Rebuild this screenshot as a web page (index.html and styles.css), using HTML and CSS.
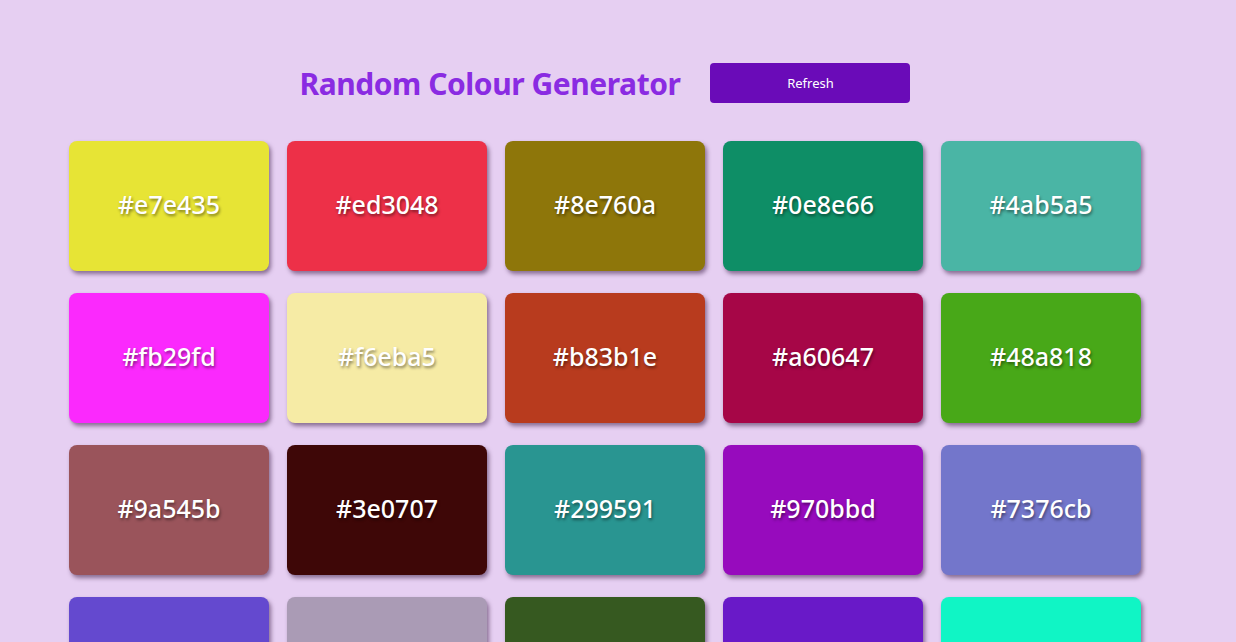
FILE: index.html
```html
<!DOCTYPE html>
<html>
<head>
<meta charset="utf-8">
<title>Random Colour Generator</title>
<link rel="stylesheet" href="styles.css">
</head>
<body>
<div class="page">
  <header class="header">
    <h1 class="title">Random Colour Generator</h1>
    <button class="refresh">Refresh</button>
  </header>
  <main class="grid">
    <div class="card" style="background:#e7e435">#e7e435</div>
    <div class="card" style="background:#ed3048">#ed3048</div>
    <div class="card" style="background:#8e760a">#8e760a</div>
    <div class="card" style="background:#0e8e66">#0e8e66</div>
    <div class="card" style="background:#4ab5a5">#4ab5a5</div>
    <div class="card" style="background:#fb29fd">#fb29fd</div>
    <div class="card" style="background:#f6eba5">#f6eba5</div>
    <div class="card" style="background:#b83b1e">#b83b1e</div>
    <div class="card" style="background:#a60647">#a60647</div>
    <div class="card" style="background:#48a818">#48a818</div>
    <div class="card" style="background:#9a545b">#9a545b</div>
    <div class="card" style="background:#3e0707">#3e0707</div>
    <div class="card" style="background:#299591">#299591</div>
    <div class="card" style="background:#970bbd">#970bbd</div>
    <div class="card" style="background:#7376cb">#7376cb</div>
    <div class="card" style="background:#6449cf">#6449cf</div>
    <div class="card" style="background:#aa9bb5">#aa9bb5</div>
    <div class="card" style="background:#365920">#365920</div>
    <div class="card" style="background:#6919c8">#6919c8</div>
    <div class="card" style="background:#10f5c5">#10f5c5</div>
  </main>
</div>
</body>
</html>
```
FILE: styles.css
```css
* { box-sizing: border-box; }
html, body {
  margin: 0;
  padding: 0;
  background: #e6cff2;
  font-family: "Noto Sans", "Open Sans", sans-serif;
}
.page {
  width: 1072px;
  margin-left: 69px;
  padding-top: 63px;
}
.header {
  display: flex;
  align-items: center;
  justify-content: center;
  gap: 30px;
  height: 40px;
  margin-bottom: 38px;
}
.title {
  margin: 0;
  font-size: 30px;
  font-weight: 700;
  color: #8a2be2;
  letter-spacing: -0.45px;
}
.refresh {
  width: 200px;
  height: 40px;
  border: none;
  border-radius: 4px;
  background: #6a0bb8;
  color: #ffffff;
  font-family: inherit;
  font-size: 13px;
}
.grid {
  display: grid;
  grid-template-columns: repeat(5, 200px);
  column-gap: 18px;
  row-gap: 22px;
}
.card {
  height: 130px;
  padding-bottom: 4px;
  border-radius: 8px;
  display: flex;
  align-items: center;
  justify-content: center;
  color: #ffffff;
  font-size: 25px;
  font-weight: 500;
  text-shadow: 1px 2px 3px rgba(0,0,0,0.45);
  box-shadow: 2px 3px 4px rgba(60,30,70,0.55);
}
```
